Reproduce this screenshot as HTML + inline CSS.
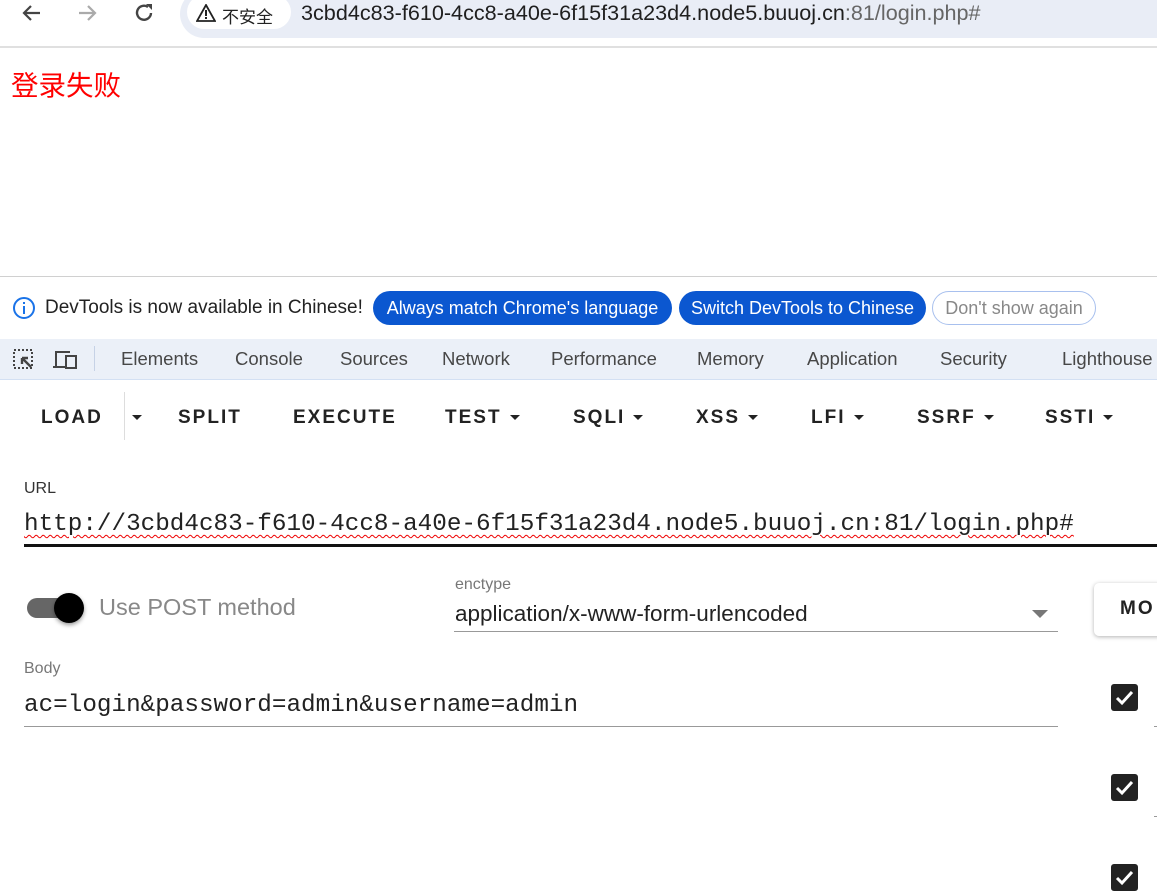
<!DOCTYPE html>
<html><head><meta charset="utf-8"><style>
*{margin:0;padding:0;box-sizing:border-box}
body{width:1157px;height:884px;overflow:hidden;background:#fff;font-family:"Liberation Sans","Noto Sans CJK SC",sans-serif;position:relative}
.a{position:absolute;white-space:nowrap}
.tab{position:absolute;top:348px;font-size:18.5px;color:#474747}
.btn{position:absolute;top:407px;font-size:19px;font-weight:bold;letter-spacing:2px;color:#222}
.tri{display:inline-block;width:0;height:0;border-left:5px solid transparent;border-right:5px solid transparent;border-top:5px solid #222;vertical-align:middle;margin-left:8px}
.cb{position:absolute;left:1111px;width:27px;height:27px;background:#222;border-radius:3px}
.mono{font-family:"Liberation Mono",monospace;font-size:24.3px;color:#222}
</style></head><body>
<div class="a" style="left:0;top:0;width:1157px;height:47px;background:#fff"></div>
<svg class="a" style="left:20px;top:3px" width="140" height="22"><path d="M20 10H4M11 3L4 10l7 7" stroke="#444" stroke-width="2.2" fill="none"/><path d="M59 10h16M68 3l7 7-7 7" stroke="#aaa" stroke-width="2.2" fill="none"/><path d="M128 4a7 7 0 1 0 3 6" stroke="#444" stroke-width="2.4" fill="none"/><path d="M126 1h6v6z" fill="#444"/></svg>
<div class="a" style="left:180px;top:-10px;width:1000px;height:48px;background:#e9edf6;border-radius:24px"></div>
<div class="a" style="left:187px;top:-5px;width:104px;height:34px;background:#fff;border-radius:17px"></div>
<svg class="a" style="left:196px;top:4px" width="20" height="18"><path d="M10 1L19 17H1z" fill="none" stroke="#222" stroke-width="1.8"/><rect x="9" y="6" width="2" height="6" fill="#222"/><rect x="9" y="13" width="2" height="2" fill="#222"/></svg>
<div class="a" style="left:222px;top:3px;font-size:17px;color:#222">不安全</div>
<div class="a" style="left:301px;top:0px;font-size:21.6px;color:#1f1f1f">3cbd4c83-f610-4cc8-a40e-6f15f31a23d4.node5.buuoj.cn<span style="color:#666">:81/login.php#</span></div>
<div class="a" style="left:0;top:46px;width:1157px;height:2px;background:#e0e0e0"></div>
<div class="a" style="left:11px;top:63px;font-size:27.5px;color:#f00">登录失败</div>
<div class="a" style="left:0;top:276px;width:1157px;height:1px;background:#d0d0d0"></div>
<svg class="a" style="left:12px;top:296px" width="24" height="24"><circle cx="12" cy="12" r="10" fill="none" stroke="#1a73e8" stroke-width="2"/><rect x="11" y="10" width="2" height="8" fill="#1a73e8"/><rect x="11" y="6" width="2" height="2" fill="#1a73e8"/></svg>
<div class="a" style="left:45px;top:297px;font-size:19px;color:#222">DevTools is now available in Chinese!</div>
<div class="a" style="left:373px;top:291px;width:299px;height:34px;background:#0b57d0;border-radius:17px;color:#fff;font-size:18px;line-height:34px;text-align:center">Always match Chrome's language</div>
<div class="a" style="left:679px;top:291px;width:247px;height:34px;background:#0b57d0;border-radius:17px;color:#fff;font-size:18px;line-height:34px;text-align:center">Switch DevTools to Chinese</div>
<div class="a" style="left:932px;top:291px;width:164px;height:34px;border:1px solid #a8c0ee;border-radius:17px;color:#888;font-size:18px;line-height:32px;text-align:center">Don't show again</div>
<div class="a" style="left:0;top:339px;width:1157px;height:41px;background:#ebf0f8;border-bottom:1px solid #d3e0f3"></div>
<svg class="a" style="left:12px;top:348px" width="70" height="24"><rect x="2" y="2" width="18" height="18" fill="none" stroke="#444" stroke-width="2" stroke-dasharray="2 2"/><path d="M10 10l9 9M10 10h6M10 10v6" stroke="#444" stroke-width="2.4" fill="none"/><path d="M44 19V4h14" stroke="#444" stroke-width="2" fill="none"/><rect x="54" y="8" width="10" height="12" fill="none" stroke="#444" stroke-width="2"/><path d="M41 19h12" stroke="#444" stroke-width="2"/></svg>
<div class="a" style="left:94px;top:346px;width:1px;height:25px;background:#c6d2e6"></div>
<div class="tab" style="left:121px">Elements</div>
<div class="tab" style="left:235px">Console</div>
<div class="tab" style="left:340px">Sources</div>
<div class="tab" style="left:442px">Network</div>
<div class="tab" style="left:551px">Performance</div>
<div class="tab" style="left:697px">Memory</div>
<div class="tab" style="left:807px">Application</div>
<div class="tab" style="left:940px">Security</div>
<div class="tab" style="left:1062px">Lighthouse</div>
<div class="btn" style="left:41px">LOAD</div>
<div class="a" style="left:124px;top:392px;width:1px;height:48px;background:#ddd"></div>
<div class="btn" style="left:124px"><span class="tri"></span></div>
<div class="btn" style="left:178px">SPLIT</div>
<div class="btn" style="left:293px">EXECUTE</div>
<div class="btn" style="left:445px">TEST<span class="tri"></span></div>
<div class="btn" style="left:573px">SQLI<span class="tri"></span></div>
<div class="btn" style="left:696px">XSS<span class="tri"></span></div>
<div class="btn" style="left:811px">LFI<span class="tri"></span></div>
<div class="btn" style="left:917px">SSRF<span class="tri"></span></div>
<div class="btn" style="left:1045px">SSTI<span class="tri"></span></div>
<div class="a" style="left:24px;top:480px;font-size:16px;color:#333">URL</div>
<div class="a mono" style="left:24px;top:511px;text-decoration:underline wavy #e00;text-decoration-thickness:1px;text-underline-offset:4px">http://3cbd4c83-f610-4cc8-a40e-6f15f31a23d4.node5.buuoj.cn:81/login.php#</div>
<div class="a" style="left:24px;top:544px;width:1133px;height:3px;background:#111"></div>
<div class="a" style="left:27px;top:598px;width:50px;height:20px;background:#666;border-radius:10px"></div>
<div class="a" style="left:54px;top:593px;width:30px;height:30px;background:#000;border-radius:50%;box-shadow:0 2px 4px rgba(0,0,0,.4)"></div>
<div class="a" style="left:99px;top:594px;font-size:23.5px;color:#888">Use POST method</div>
<div class="a" style="left:455px;top:576px;font-size:16px;color:#777">enctype</div>
<div class="a" style="left:455px;top:601px;font-size:22.5px;color:#222">application/x-www-form-urlencoded</div>
<div class="a" style="left:1032px;top:610px;width:0;height:0;border-left:8px solid transparent;border-right:8px solid transparent;border-top:8px solid #777"></div>
<div class="a" style="left:454px;top:631px;width:604px;height:1px;background:#999"></div>
<div class="a" style="left:1094px;top:583px;width:80px;height:53px;background:#fff;border-radius:5px;box-shadow:0 1px 4px rgba(0,0,0,.3);font-size:19px;font-weight:bold;letter-spacing:2px;color:#222;padding:15px 0 0 26px">MO</div>
<div class="a" style="left:24px;top:660px;font-size:16px;color:#777">Body</div>
<div class="a mono" style="left:24px;top:692px">ac=login&amp;password=admin&amp;username=admin</div>
<div class="a" style="left:24px;top:726px;width:1034px;height:1px;background:#999"></div>
<div class="cb" style="top:684px"></div><div class="cb" style="top:774px"></div><div class="cb" style="top:864px"></div>
<svg class="a" style="left:1111px;top:684px" width="27" height="210"><g stroke="#fff" stroke-width="3" fill="none"><path d="M6 14l5 5 10-11"/><path d="M6 104l5 5 10-11"/><path d="M6 194l5 5 10-11"/></g></svg>
<div class="a" style="left:1154px;top:726px;width:3px;height:1px;background:#999"></div>
<div class="a" style="left:1154px;top:816px;width:3px;height:1px;background:#999"></div>
</body></html>
